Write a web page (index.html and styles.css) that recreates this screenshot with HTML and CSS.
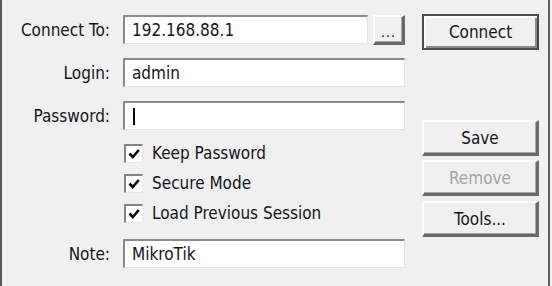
FILE: index.html
```html
<!DOCTYPE html>
<html>
<head>
<meta charset="utf-8">
<link rel="stylesheet" href="styles.css">
</head>
<body>
<div class="window">
  <div class="form">
    <div class="label r1">Connect To:</div>
    <div class="field r1 with-btn">
      <div class="input grow">192.168.88.1</div>
      <div class="btn small">...</div>
    </div>

    <div class="label r2">Login:</div>
    <div class="field r2"><div class="input">admin</div></div>

    <div class="label r3">Password:</div>
    <div class="field r3"><div class="input"><span class="caret"></span></div></div>

    <div class="label spacer"></div>
    <div class="field checks">
      <div class="check-row"><span class="cb"><svg viewBox="0 0 14 14" width="14" height="14"><path d="M2.5 6.5 L5.8 10 L11.8 3" fill="none" stroke="#000" stroke-width="2.6"/></svg></span><span>Keep Password</span></div>
      <div class="check-row"><span class="cb"><svg viewBox="0 0 14 14" width="14" height="14"><path d="M2.5 6.5 L5.8 10 L11.8 3" fill="none" stroke="#000" stroke-width="2.6"/></svg></span><span>Secure Mode</span></div>
      <div class="check-row"><span class="cb"><svg viewBox="0 0 14 14" width="14" height="14"><path d="M2.5 6.5 L5.8 10 L11.8 3" fill="none" stroke="#000" stroke-width="2.6"/></svg></span><span>Load Previous Session</span></div>
    </div>

    <div class="label r5">Note:</div>
    <div class="field r5"><div class="input">MikroTik</div></div>
  </div>

  <div class="buttons">
    <div class="btn big default">Connect</div>
    <div class="btn big save">Save</div>
    <div class="btn big remove disabled">Remove</div>
    <div class="btn big tools">Tools...</div>
  </div>
</div>
</body>
</html>
```

FILE: styles.css
```css
html, body {
  margin: 0;
  padding: 0;
  background: #f0f0f0;
}
body {
  width: 552px;
  height: 286px;
  overflow: hidden;
  font-family: "DejaVu Sans Condensed", "DejaVu Sans", sans-serif;
  font-stretch: condensed;
  font-size: 17px;
  color: #141420;
}
.window {
  box-sizing: border-box;
  width: 550px;
  height: 286px;
  border-left: 2px solid #5a5a5a;
  border-right: 2px solid #5a5a5a;
  display: flex;
  align-items: flex-start;
}
.form {
  display: grid;
  grid-template-columns: 108px 282px;
  column-gap: 13px;
  padding-top: 15px;
}
.label {
  text-align: right;
  display: flex;
  align-items: center;
  justify-content: flex-end;
  height: 29px;
}
.label.spacer { height: auto; }
.field {
  display: flex;
}
.r2 { margin-top: 13px; }
.r3 { margin-top: 14px; }
.r5 { margin-top: 11px; }
.with-btn { gap: 5px; }
.input {
  box-sizing: border-box;
  height: 29px;
  flex: 1;
  background: #fff;
  border-style: solid;
  border-width: 2px 1px 1px 2px;
  border-color: #8a8a8a #e4e4e4 #e4e4e4 #8a8a8a;
  padding-left: 7px;
  display: flex;
  align-items: center;
  white-space: nowrap;
}
.caret {
  display: inline-block;
  width: 1.5px;
  height: 17px;
  background: #000;
  margin-left: 1px;
}
.checks {
  flex-direction: column;
  padding-top: 8px;
}
.check-row {
  display: flex;
  align-items: center;
  height: 30px;
  gap: 9px;
  padding-left: 1px;
}
.cb {
  box-sizing: border-box;
  width: 19px;
  height: 19px;
  background: #fff;
  border-style: solid;
  border-width: 2px 1px 1px 2px;
  border-color: #848484 #e8e8e8 #e8e8e8 #848484;
  display: flex;
  align-items: center;
  justify-content: center;
}
.btn {
  box-sizing: border-box;
  background: #f0f0f0;
  border-style: solid;
  border-width: 2px 3px 3px 2px;
  border-color: #ffffff #6a6a6a #6a6a6a #ffffff;
  box-shadow: inset -1px -1px 0 #a8a8a8;
  display: flex;
  align-items: center;
  justify-content: center;
  white-space: nowrap;
}
.btn.small {
  width: 32px;
  height: 30px;
  font-size: 14px;
  letter-spacing: 1px;
  padding-top: 4px;
}
.buttons {
  display: flex;
  flex-direction: column;
  margin-left: 17px;
  padding-top: 14px;
  width: 117px;
}
.btn.big {
  height: 36px;
}
.btn.default {
  border: 2px solid #4a4a4a;
  box-shadow: inset 2px 2px 0 #ffffff, inset -2px -2px 0 #8a8a8a;
}
.save { margin-top: 70px; }
.remove { margin-top: 4px; }
.tools { margin-top: 5px; }
.disabled { color: #a3a3a3; }
```
